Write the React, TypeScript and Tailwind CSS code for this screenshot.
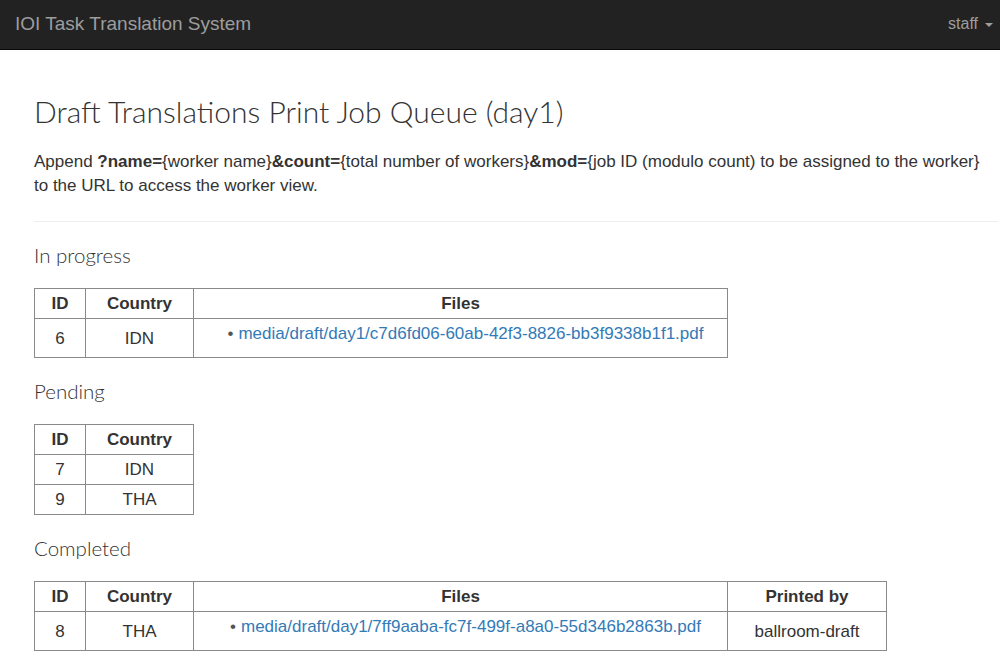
import React from 'react';

const headFont = "font-['Lato','Noto_Sans',sans-serif]";
const bodyFont = "font-['Liberation_Sans',Arial,sans-serif]";

const cell = 'border border-[#8a8a8a] px-[6px] py-[3px] text-center align-middle leading-[23px]';

function FileList({ file }: { file: string }) {
  return (
    <ul className="list-none pl-[10px] mb-[9px]">
      <li>
        <span className="text-[#555] mr-[5px]">•</span>
        <a href="#" className="text-[#337ab7] hover:underline">
          {file}
        </a>
      </li>
    </ul>
  );
}

function Section({ title, children }: { title: string; children: React.ReactNode }) {
  return (
    <div>
      <h3 className={`${headFont} font-light text-[20.5px] leading-[22px] text-[#333] mt-[22px] mb-[22px]`}>{title}</h3>
      {children}
    </div>
  );
}

export default function App() {
  return (
    <div className={`${bodyFont} min-h-[667px] bg-white text-[17px] text-[#333]`}>
      {/* Navbar */}
      <nav className="h-[50px] bg-[#222] border-b border-[#080808] flex items-center justify-between pl-[15px] pr-[7px]">
        <span className="text-[19px] text-[#9d9d9d] leading-[20px] -mt-[2px]">IOI Task Translation System</span>
        <span className="flex items-center gap-[7px] text-[16px] text-[#9d9d9d] -mt-[2px]">
          staff
          <span className="inline-block w-0 h-0 border-l-[4px] border-r-[4px] border-t-[4px] border-l-transparent border-r-transparent border-t-[#9d9d9d] mt-[2px]" />
        </span>
      </nav>

      <div className="pl-[34px] pr-[2px]">
        <h1 className={`${headFont} font-light text-[30px] leading-[36px] text-[#333] mt-[43px]`}>
          Draft Translations Print Job Queue (day1)
        </h1>
        <p className="mt-[21px] leading-[24px]">
          Append <b>?name=</b>{'{worker name}'}<b>&amp;count=</b>{'{total number of workers}'}<b>&amp;mod=</b>
          {'{job ID (modulo count) to be assigned to the worker}'} to the URL to access the worker view.
        </p>
        <hr className="mt-[23px] border-0 border-t border-[#eee]" />

        <Section title="In progress">
          <table className="border-collapse">
            <thead>
              <tr>
                <th className={`${cell} w-[51px] font-bold`}>ID</th>
                <th className={`${cell} w-[108px] font-bold`}>Country</th>
                <th className={`${cell} w-[534px] font-bold`}>Files</th>
              </tr>
            </thead>
            <tbody>
              <tr>
                <td className={cell}>6</td>
                <td className={cell}>IDN</td>
                <td className={cell}>
                  <FileList file="media/draft/day1/c7d6fd06-60ab-42f3-8826-bb3f9338b1f1.pdf" />
                </td>
              </tr>
            </tbody>
          </table>
        </Section>

        <Section title="Pending">
          <table className="border-collapse">
            <thead>
              <tr>
                <th className={`${cell} w-[51px] font-bold`}>ID</th>
                <th className={`${cell} w-[108px] font-bold`}>Country</th>
              </tr>
            </thead>
            <tbody>
              <tr>
                <td className={cell}>7</td>
                <td className={cell}>IDN</td>
              </tr>
              <tr>
                <td className={cell}>9</td>
                <td className={cell}>THA</td>
              </tr>
            </tbody>
          </table>
        </Section>

        <Section title="Completed">
          <table className="border-collapse">
            <thead>
              <tr>
                <th className={`${cell} w-[51px] font-bold`}>ID</th>
                <th className={`${cell} w-[108px] font-bold`}>Country</th>
                <th className={`${cell} w-[534px] font-bold`}>Files</th>
                <th className={`${cell} w-[159px] font-bold`}>Printed by</th>
              </tr>
            </thead>
            <tbody>
              <tr>
                <td className={cell}>8</td>
                <td className={cell}>THA</td>
                <td className={cell}>
                  <FileList file="media/draft/day1/7ff9aaba-fc7f-499f-a8a0-55d346b2863b.pdf" />
                </td>
                <td className={cell}>ballroom-draft</td>
              </tr>
            </tbody>
          </table>
        </Section>
      </div>
    </div>
  );
}
